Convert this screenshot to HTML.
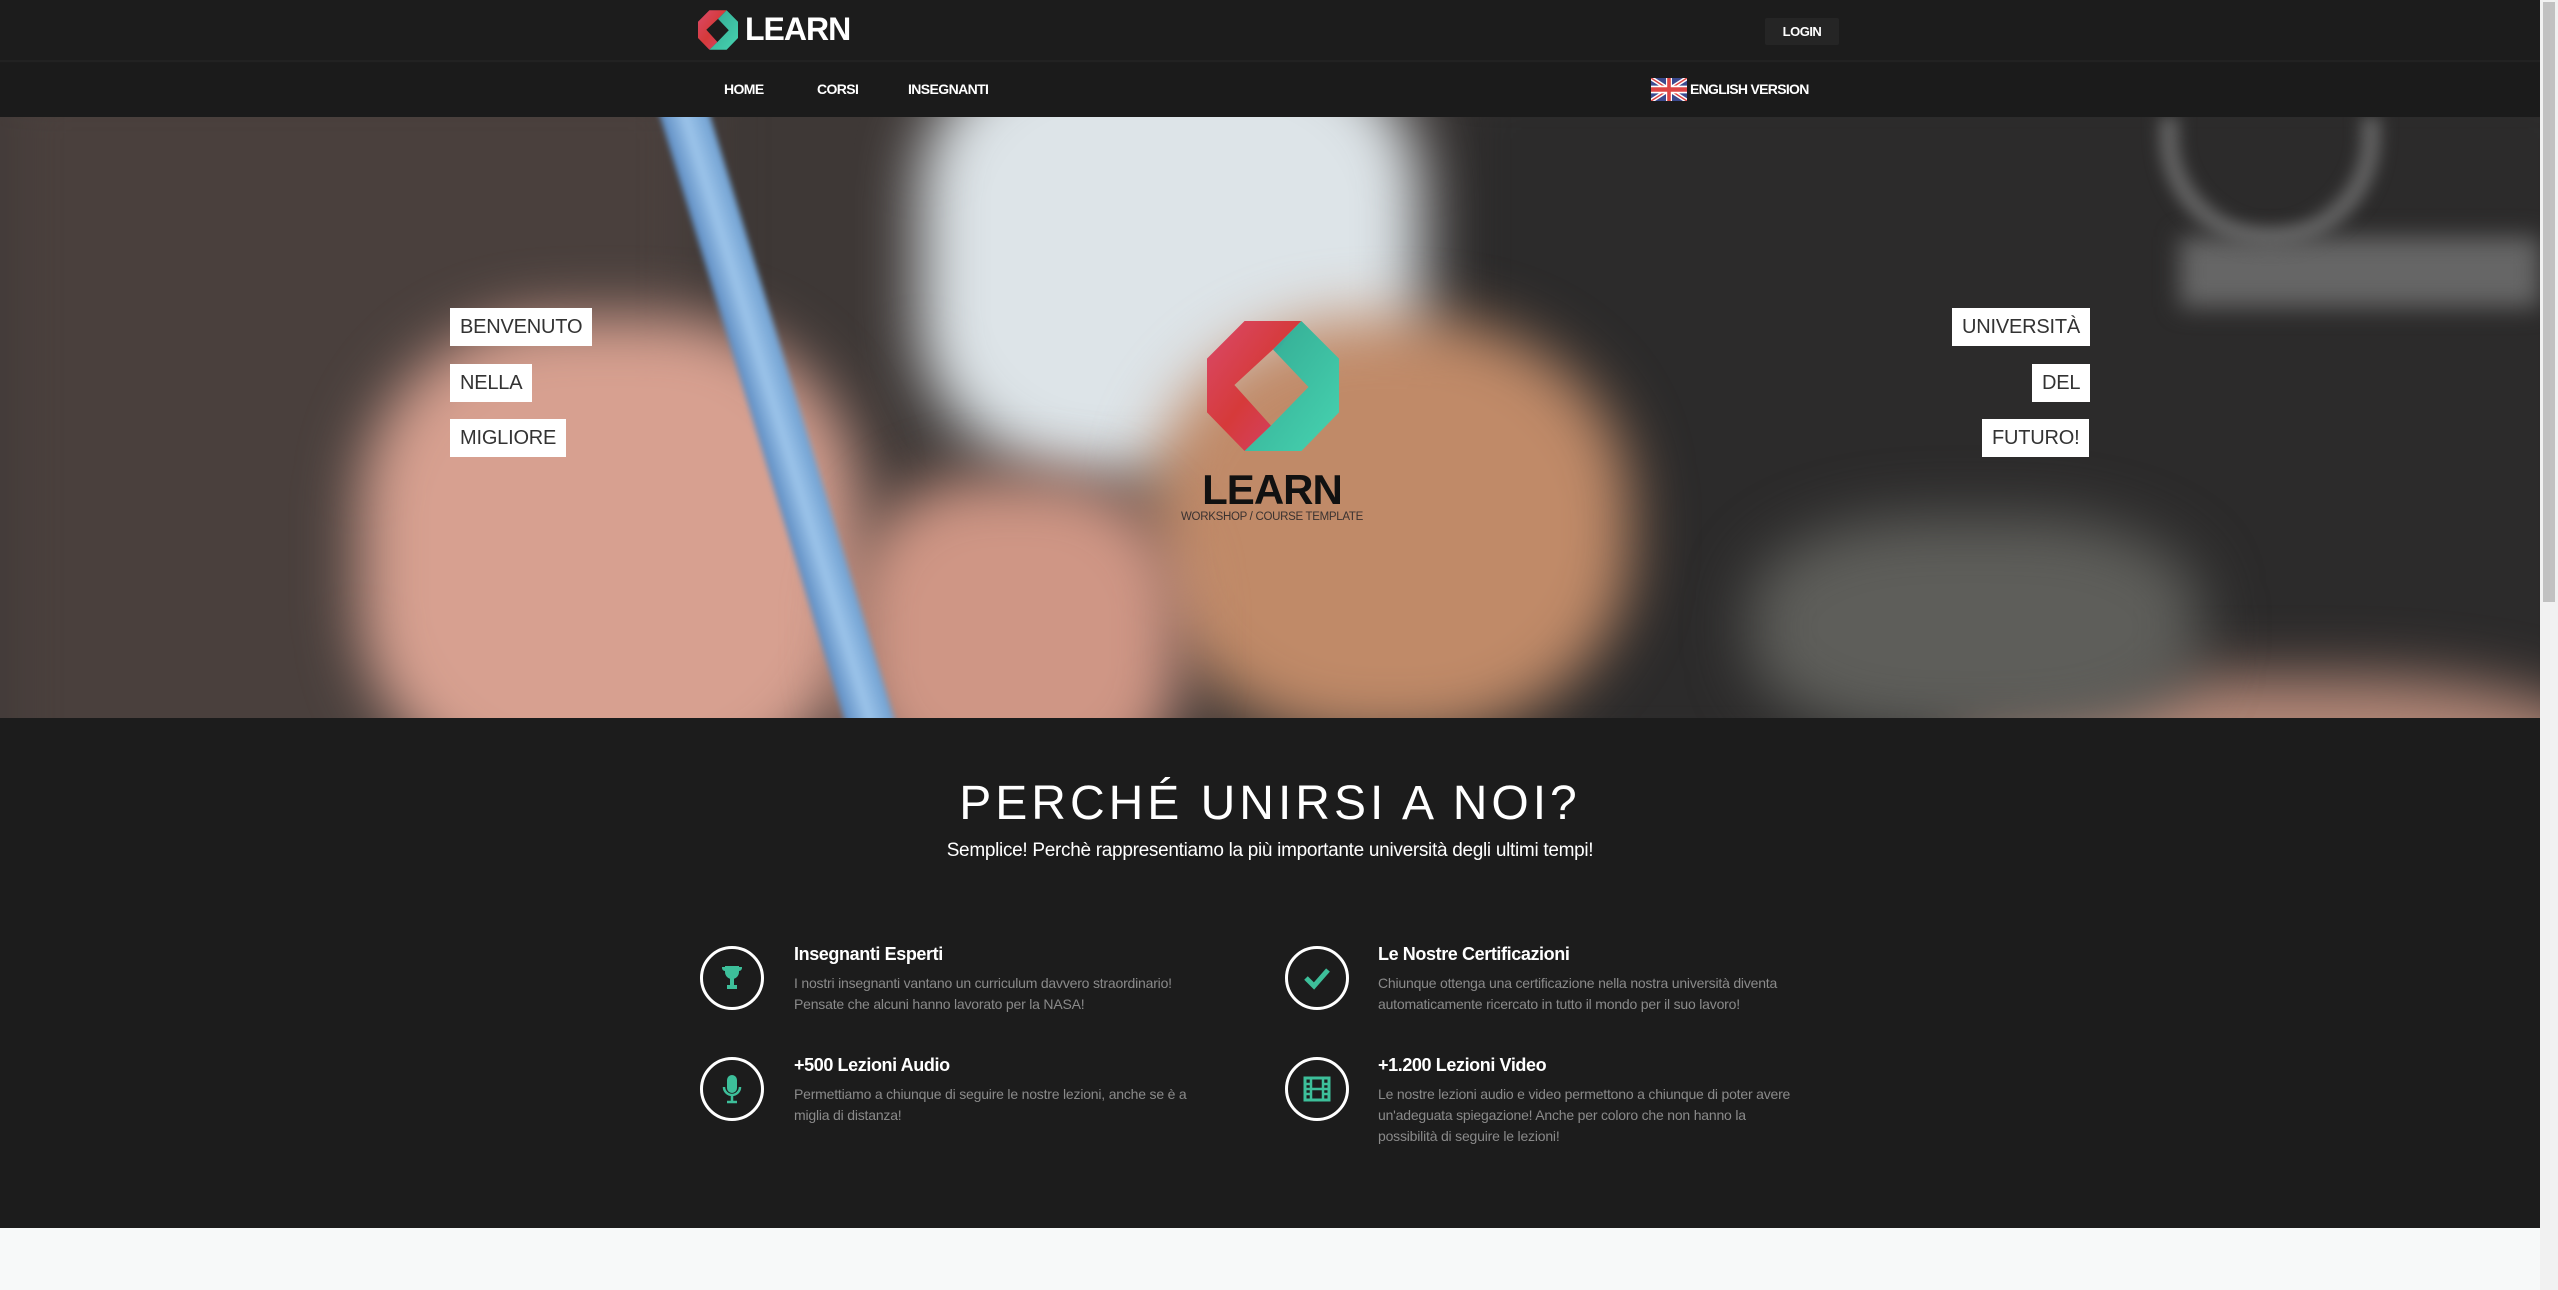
<!DOCTYPE html>
<html><head><meta charset="utf-8">
<style>
*{margin:0;padding:0;box-sizing:border-box}
body{width:2558px;height:1290px;overflow:hidden;background:#1c1c1c;font-family:"Liberation Sans",sans-serif;position:relative}
.top{position:absolute;left:0;top:0;width:2540px;height:62px;background:#1c1c1c;border-bottom:2px solid #222}
.nav{position:absolute;left:0;top:63px;width:2540px;height:54px;background:#1b1b1b}
.abs{position:absolute}
.navl{color:#fff;font-size:14px;font-weight:bold;top:81px;letter-spacing:-0.6px}
.hero{position:absolute;left:0;top:117px;width:2540px;height:601px;overflow:hidden;background:#3e3836}
.hero .b{position:absolute;filter:blur(30px)}
.tag{position:absolute;background:#fff;color:#333;font-size:20px;height:38px;line-height:38px;padding:0 10px;letter-spacing:-0.2px}
.sec{position:absolute;left:0;top:718px;width:2540px;height:510px;background:#1c1c1c}
.foot{position:absolute;left:0;top:1228px;width:2540px;height:62px;background:#f7f9f9}
.scroll{position:absolute;left:2540px;top:0;width:18px;height:1290px;background:#f1f1f1}
.thumb{position:absolute;left:2543px;top:2px;width:12px;height:600px;background:#c1c1c1}
.circ{position:absolute;width:64px;height:64px;border:3px solid #fff;border-radius:50%;display:flex;align-items:center;justify-content:center}
.ft{position:absolute;color:#fff;font-weight:bold;font-size:18px;letter-spacing:-0.4px}
.fd{position:absolute;color:#8a8a8a;font-size:14px;line-height:21px;width:500px;letter-spacing:-0.2px}
</style></head><body>
<div class="top"></div>
<svg class="abs" style="left:698px;top:10px" width="40" height="40" viewBox="0 0 130 128">
<defs><linearGradient id="r" x1="0" y1="0" x2="1" y2="1"><stop offset="0" stop-color="#d94a6a"/><stop offset="0.5" stop-color="#d63a3a"/><stop offset="1" stop-color="#d24470"/></linearGradient>
<linearGradient id="t" x1="0" y1="0" x2="1" y2="1"><stop offset="0" stop-color="#3a3f8a"/><stop offset="0.3" stop-color="#38b49a"/><stop offset="1" stop-color="#47d3b0"/></linearGradient></defs>
<polygon fill="url(#r)" points="37,0 93,0 65,28 27,63 63,103 37,128 0,90 0,37"/>
<polygon fill="url(#t)" points="93,0 130,37 130,90 93,128 37,128 63,103 100,65 65,28"/>
</svg>
<div class="abs" style="left:745px;top:11px;color:#fff;font-size:32px;font-weight:bold;letter-spacing:-1px">LEARN</div>
<div class="abs" style="left:1765px;top:18px;width:74px;height:27px;background:#252525;border-radius:2px;color:#fff;font-size:13px;font-weight:bold;text-align:center;line-height:27px;letter-spacing:-0.5px">LOGIN</div>
<div class="nav"></div>
<div class="abs navl" style="left:724px">HOME</div>
<div class="abs navl" style="left:817px">CORSI</div>
<div class="abs navl" style="left:908px">INSEGNANTI</div>
<svg class="abs" style="left:1651px;top:78px" width="36" height="23" viewBox="0 0 60 30" preserveAspectRatio="none">
<rect width="60" height="30" fill="#3b4a8f"/>
<path d="M0,0 L60,30 M60,0 L0,30" stroke="#fff" stroke-width="6"/>
<path d="M0,0 L60,30 M60,0 L0,30" stroke="#d44" stroke-width="2"/>
<path d="M30,0 V30 M0,15 H60" stroke="#fff" stroke-width="10"/>
<path d="M30,0 V30 M0,15 H60" stroke="#d44" stroke-width="6"/>
</svg>
<div class="abs navl" style="left:1690px;top:81px;font-size:14px;letter-spacing:-0.7px">ENGLISH VERSION</div>

<div class="hero">
 <div class="b" style="left:0;top:-50px;width:700px;height:750px;background:#4a403d"></div>
 <div class="b" style="left:1450px;top:-50px;width:1150px;height:700px;background:#2c2b2b"></div>
 <div class="b" style="left:920px;top:-80px;width:500px;height:440px;background:#dde4e8;border-radius:35%"></div>
 <div class="b" style="left:1150px;top:200px;width:480px;height:420px;background:#c08a68;border-radius:45%"></div>
 <div class="b" style="left:360px;top:200px;width:500px;height:480px;background:#d7a090;border-radius:40%"></div>
 <div class="b" style="left:850px;top:360px;width:330px;height:320px;background:#cf9685;border-radius:40%"></div>
 <div class="b" style="left:1950px;top:560px;width:650px;height:160px;background:#b48878;border-radius:40%"></div>
 <div class="b" style="left:1750px;top:400px;width:450px;height:220px;background:#5e5e5a;border-radius:40%"></div>
 <div class="b" style="left:2180px;top:120px;width:360px;height:70px;background:#666;filter:blur(12px)"></div>
 <div class="b" style="left:2160px;top:0px;width:220px;height:130px;border:18px solid #666;border-top:none;border-radius:0 0 110px 110px;background:none;filter:blur(8px)"></div>
 <div style="position:absolute;left:648px;top:-40px;width:48px;height:720px;background:linear-gradient(90deg,#5d8cc2,#9cc4ea,#6f9fd0);transform:rotate(-17deg);transform-origin:top left;filter:blur(3px)"></div>
</div>
<div class="tag" style="left:450px;top:308px">BENVENUTO</div>
<div class="tag" style="left:450px;top:364px">NELLA</div>
<div class="tag" style="left:450px;top:419px">MIGLIORE</div>
<div class="tag" style="left:1952px;top:308px">UNIVERSITÀ</div>
<div class="tag" style="left:2032px;top:364px">DEL</div>
<div class="tag" style="left:1982px;top:419px">FUTURO!</div>
<svg class="abs" style="left:1207px;top:321px" width="132" height="130" viewBox="0 0 130 128">
<polygon fill="url(#r)" points="37,0 93,0 65,28 27,63 63,103 37,128 0,90 0,37"/>
<polygon fill="url(#t)" points="93,0 130,37 130,90 93,128 37,128 63,103 100,65 65,28"/>
</svg>
<div class="abs" style="left:1100px;width:344px;text-align:center;top:466px;font-size:42px;font-weight:bold;color:#111;letter-spacing:-1px">LEARN</div>
<div class="abs" style="left:1100px;width:344px;text-align:center;top:511px;font-size:11.5px;color:#3a3230;letter-spacing:-0.3px">WORKSHOP / COURSE TEMPLATE</div>

<div class="sec"></div>
<div class="abs" style="left:0;width:2540px;text-align:center;top:776px;color:#fff;font-size:48px;letter-spacing:4px">PERCHÉ UNIRSI A NOI?</div>
<div class="abs" style="left:0;width:2540px;text-align:center;top:840px;color:#fff;font-size:19px;letter-spacing:-0.3px">Semplice! Perchè rappresentiamo la più importante università degli ultimi tempi!</div>

<div class="circ" style="left:700px;top:946px"><svg width="24" height="28" viewBox="0 0 24 28"><path d="M5 2h14v6a7 7 0 0 1-14 0z M2 3h3v4a3 3 0 0 1-3-3z M22 3h-3v4a3 3 0 0 0 3-3z" fill="#3dbf9a"/><rect x="10" y="14" width="4" height="7" fill="#3dbf9a"/><rect x="7" y="21" width="10" height="4" fill="#3dbf9a"/></svg></div>
<div class="ft" style="left:794px;top:944px">Insegnanti Esperti</div>
<div class="fd" style="left:794px;top:973px">I nostri insegnanti vantano un curriculum davvero straordinario!<br>Pensate che alcuni hanno lavorato per la NASA!</div>

<div class="circ" style="left:1285px;top:946px"><svg width="28" height="24" viewBox="0 0 28 24"><path d="M3 12l8 8L25 4" stroke="#3dbf9a" stroke-width="5" fill="none"/></svg></div>
<div class="ft" style="left:1378px;top:944px">Le Nostre Certificazioni</div>
<div class="fd" style="left:1378px;top:973px">Chiunque ottenga una certificazione nella nostra università diventa automaticamente ricercato in tutto il mondo per il suo lavoro!</div>

<div class="circ" style="left:700px;top:1057px"><svg width="20" height="30" viewBox="0 0 20 30"><rect x="5" y="1" width="10" height="18" rx="5" fill="#3dbf9a"/><path d="M2 13a8 8 0 0 0 16 0 M10 21v6 M5 28h10" stroke="#3dbf9a" stroke-width="2.5" fill="none"/></svg></div>
<div class="ft" style="left:794px;top:1055px">+500 Lezioni Audio</div>
<div class="fd" style="left:794px;top:1084px">Permettiamo a chiunque di seguire le nostre lezioni, anche se è a<br>miglia di distanza!</div>

<div class="circ" style="left:1285px;top:1057px"><svg width="28" height="26" viewBox="0 0 28 26"><rect x="2" y="2" width="24" height="22" fill="none" stroke="#3dbf9a" stroke-width="3"/><path d="M8 2v22 M20 2v22 M8 13h12 M2 8h6 M2 13h6 M2 18h6 M20 8h6 M20 13h6 M20 18h6" stroke="#3dbf9a" stroke-width="2.5"/></svg></div>
<div class="ft" style="left:1378px;top:1055px">+1.200 Lezioni Video</div>
<div class="fd" style="left:1378px;top:1084px">Le nostre lezioni audio e video permettono a chiunque di poter avere<br>un'adeguata spiegazione! Anche per coloro che non hanno la<br>possibilità di seguire le lezioni!</div>

<div class="foot"></div>
<div class="scroll"></div><div class="thumb"></div>
</body></html>
